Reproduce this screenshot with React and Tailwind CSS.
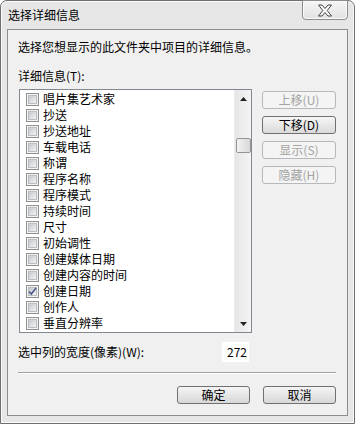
import React from 'react'

const FONT = { fontFamily: '"Noto Sans CJK SC", "Noto Sans", sans-serif' }

const ITEMS = [
  { label: '唱片集艺术家' },
  { label: '抄送' },
  { label: '抄送地址' },
  { label: '车载电话' },
  { label: '称谓' },
  { label: '程序名称' },
  { label: '程序模式' },
  { label: '持续时间' },
  { label: '尺寸' },
  { label: '初始调性' },
  { label: '创建媒体日期' },
  { label: '创建内容的时间' },
  { label: '创建日期', checked: true },
  { label: '创作人' },
  { label: '垂直分辨率' },
]

function CheckBox({ checked }) {
  return (
    <div className="w-[13px] h-[13px] border border-[#8e8f8f] bg-[#f4f4f4] p-[1px] shrink-0">
      <div className="relative w-full h-full border border-[#b9bcc1] bg-linear-to-br from-[#c4c7cc] to-[#f5f5f5]">
        {checked && (
          <svg className="absolute -left-[1px] -top-[1px]" width="9" height="9" viewBox="0 0 9 9">
            <path d="M1 4.5 L3.3 7 L8 1" fill="none" stroke="#4b5a8c" strokeWidth="1.6" />
          </svg>
        )}
      </div>
    </div>
  )
}

function SideButton({ children, disabled }) {
  return (
    <div
      className={
        disabled
          ? 'w-[74px] h-[18px] rounded-[3px] border border-[#b5b9bd] bg-[#f4f4f4] text-[#a3a3a3] flex items-center justify-center text-[12px] leading-none'
          : 'w-[74px] h-[18px] rounded-[3px] border border-[#707070] bg-linear-to-b from-[#f6f6f6] to-[#dadada] text-black flex items-center justify-center text-[12px] leading-none'
      }
    >
      {children}
    </div>
  )
}

function DialogButton({ children }) {
  return (
    <div className="w-[73px] h-[18px] rounded-[3px] border border-[#707070] bg-linear-to-b from-[#f4f4f4] to-[#d8d8d8] flex items-center justify-center text-[12px] leading-none text-black">
      {children}
    </div>
  )
}

export default function App() {
  return (
    <div style={FONT} className="w-[355px] h-[424px] bg-white">
      <div className="w-full h-full flex flex-col rounded-t-[7px] border border-[#6e6e6e] bg-[#e6e6e6] shadow-[inset_0_0_0_1px_#fbfbfb]">

        {/* Title bar */}
        <div className="h-[28px] flex items-start justify-between shrink-0">
          <div className="pl-[7px] pt-[6px] text-[12px] leading-[16px] text-black">选择详细信息</div>
          <div className="-mt-px mr-[6px] w-[46px] h-[20px] rounded-b-[4px] border border-[#8c8c8c] bg-linear-to-b from-[#f5f5f5] to-[#e2e2e2] shadow-[inset_0_0_0_1px_#fafafa] flex items-center justify-center">
            <svg width="16" height="13" viewBox="0 0 16 13">
              <path
                d="M1.5 1 L5 1 L8 4.5 L11 1 L14.5 1 L10.2 6.5 L14.5 12 L11 12 L8 8.5 L5 12 L1.5 12 L5.8 6.5 Z"
                fill="#fdfdfd"
                stroke="#454545"
                strokeWidth="1"
                strokeLinejoin="round"
              />
            </svg>
          </div>
        </div>

        {/* Client area */}
        <div className="flex-1 mx-[6px] mb-[7px] border border-[#8d8d8d] bg-[#f0f0f0] pl-[10px] pr-[11px] pt-[9px] flex flex-col text-[12px] leading-[16px] text-black">
          <div>选择您想显示的此文件夹中项目的详细信息。</div>
          <div className="mt-[13px]">详细信息(T):</div>

          <div className="mt-[5px] flex gap-[10px]">
            {/* List box */}
            <div className="ml-px w-[234px] h-[244px] border border-[#828790] bg-white flex">
              <div className="flex-1 pt-px">
                {ITEMS.map(item => (
                  <div key={item.label} className="h-[16px] flex items-center gap-[4px] pl-[6px]">
                    <CheckBox checked={item.checked} />
                    <span className="whitespace-nowrap">{item.label}</span>
                  </div>
                ))}
              </div>
              {/* Scrollbar */}
              <div className="w-[17px] h-full bg-linear-to-r from-[#e6e6e6] to-[#f4f4f4] border-l border-[#ececec] flex flex-col items-center">
                <div className="h-[17px] w-full flex items-center justify-center">
                  <svg width="7" height="4" viewBox="0 0 7 4"><path d="M0 4 L3.5 0 L7 4 Z" fill="#222" /></svg>
                </div>
                <div className="mt-[31px] w-[15px] h-[15px] rounded-[2px] border border-[#959595] bg-linear-to-r from-[#f3f3f3] to-[#d8d8d8]" />
                <div className="flex-1" />
                <div className="h-[17px] w-full flex items-center justify-center">
                  <svg width="7" height="4" viewBox="0 0 7 4"><path d="M0 0 L7 0 L3.5 4 Z" fill="#222" /></svg>
                </div>
              </div>
            </div>

            {/* Side buttons */}
            <div className="mt-[2px] flex flex-col gap-[7px]">
              <SideButton disabled>上移(U)</SideButton>
              <SideButton>下移(D)</SideButton>
              <SideButton disabled>显示(S)</SideButton>
              <SideButton disabled>隐藏(H)</SideButton>
            </div>
          </div>

          {/* Column width */}
          <div className="mt-[9px] flex items-center">
            <div className="w-[204px]">选中列的宽度(像素)(W):</div>
            <div className="w-[27px] h-[20px] bg-white flex items-center justify-end pr-[2px]">272</div>
          </div>

          {/* Separator */}
          <div className="mt-[10px] h-px bg-[#a0a0a0] border-b border-white box-content" />

          {/* Dialog buttons */}
          <div className="mt-[12px] flex justify-end gap-[13px]">
            <DialogButton>确定</DialogButton>
            <DialogButton>取消</DialogButton>
          </div>
        </div>
      </div>
    </div>
  )
}
